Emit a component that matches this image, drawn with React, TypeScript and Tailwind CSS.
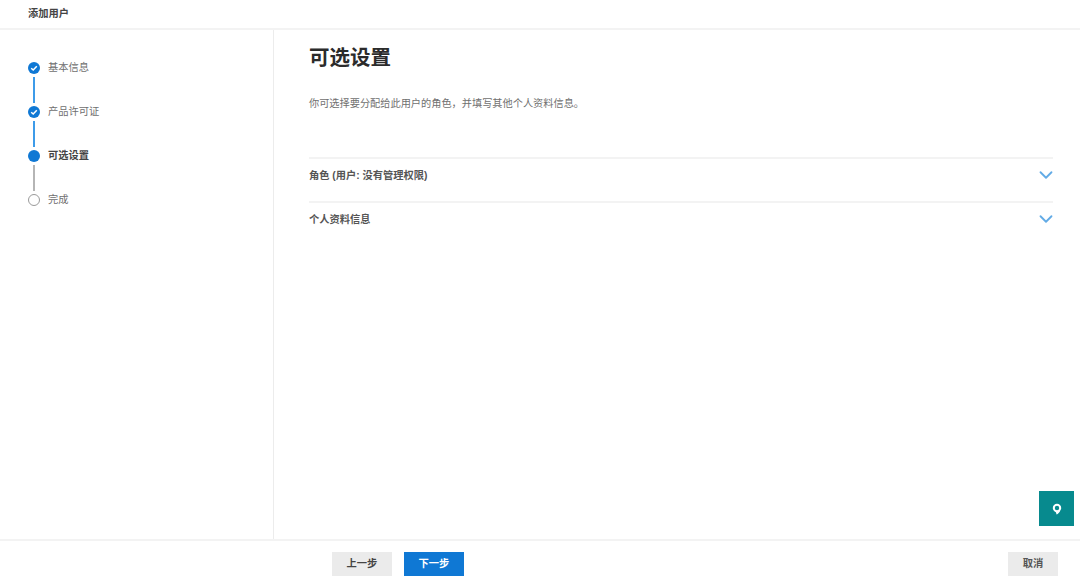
import { ChevronDown } from 'lucide-react';

const font = { fontFamily: '"Liberation Sans", "Noto Sans CJK SC", sans-serif' };

const steps = [
  { label: '基本信息', state: 'done' },
  { label: '产品许可证', state: 'done' },
  { label: '可选设置', state: 'current' },
  { label: '完成', state: 'todo' },
];

const StepDot = ({ state }: { state: string }) => {
  if (state === 'done') {
    return (
      <div className="w-3 h-3 rounded-full bg-[#0f78d4] flex items-center justify-center">
        <svg width="8" height="8" viewBox="0 0 8 8" fill="none">
          <path d="M1.2 4.2 L3.2 6 L6.8 2.2" stroke="white" strokeWidth="1.5" />
        </svg>
      </div>
    );
  }
  if (state === 'current') return <div className="w-3 h-3 rounded-full bg-[#0f78d4]" />;
  return <div className="w-3 h-3 rounded-full border-[1.5px] border-[#9a9a9a] bg-white" />;
};

const Row = ({ title }: { title: string }) => (
  <div className="h-[44px] border-t-2 border-[#f3f3f3] flex items-start justify-between pt-[10px]">
    <span className="text-[10.25px] leading-[14px] font-semibold text-[#555]">{title}</span>
    <ChevronDown className="w-[22px] h-[22px] text-[#62abe6] -mt-[5px] -mr-[4px]" strokeWidth={2} />
  </div>
);

export default function App() {
  return (
    <div className="relative h-[584px] w-[1080px] bg-white flex flex-col overflow-hidden" style={font}>
      <header className="h-[30px] shrink-0 border-b-2 border-[#f3f3f3] flex items-center pl-[28px] pb-[1px]">
        <span className="text-[10.25px] font-semibold text-[#444]">添加用户</span>
      </header>

      <div className="flex flex-1 min-h-0">
        <aside className="w-[274px] shrink-0 border-r border-[#ececec] pt-[31.5px] pl-[27.5px]">
          {steps.map((step, i) => (
            <div key={step.label}>
              <div className="flex items-center h-[12px]">
                <StepDot state={step.state} />
                <span
                  className={
                    step.state === 'current'
                      ? 'ml-[8.5px] mt-[1px] text-[10.25px] font-semibold text-[#444]'
                      : 'ml-[8.5px] mt-[1px] text-[10.25px] text-[#707070]'
                  }
                >
                  {step.label}
                </span>
              </div>
              {i < steps.length - 1 && (
                <div
                  className={
                    i < 2
                      ? 'w-[2px] h-[26px] my-[3px] ml-[5px] bg-[#3d9be9]'
                      : 'w-[2px] h-[26px] my-[3px] ml-[5px] bg-[#b5b5b5]'
                  }
                />
              )}
            </div>
          ))}
        </aside>

        <main className="flex-1 pl-[35px] pr-[27px]">
          <h1 className="text-[20.5px] leading-[28px] font-semibold text-[#2b2b2b] mt-[14px]">可选设置</h1>
          <p className="text-[10.2px] leading-[14px] text-[#707070] mt-[25px]">
            你可选择要分配给此用户的角色，并填写其他个人资料信息。
          </p>
          <div className="mt-[46px]">
            <Row title="角色 (用户: 没有管理权限)" />
            <Row title="个人资料信息" />
          </div>
        </main>
      </div>

      <footer className="h-[45px] shrink-0 border-t-2 border-[#f3f3f3] flex items-start justify-between pt-[11px] pl-[332px] pr-[22px]">
        <div className="flex gap-3">
          <button className="w-[60px] h-[24px] bg-[#ebebeb] text-[10.25px] font-semibold text-[#444]">上一步</button>
          <button className="w-[60px] h-[24px] bg-[#0f78d4] text-[10.25px] font-semibold text-white">下一步</button>
        </div>
        <button className="w-[50px] h-[24px] bg-[#ebebeb] text-[10.25px] font-semibold text-[#555]">取消</button>
      </footer>

      <div className="absolute left-[1039px] top-[491px] w-[35px] h-[35px] bg-[#078a8e] flex items-center justify-center">
        <svg width="12" height="14" viewBox="0 0 12 14" fill="none" className="ml-[1px]">
          <circle cx="6" cy="6" r="3.2" stroke="white" strokeWidth="2" />
          <path d="M4.6 9.2 L5.6 12.6 C7 11.8 8.6 10.6 9.2 8.4 Z" fill="white" />
        </svg>
      </div>
    </div>
  );
}
